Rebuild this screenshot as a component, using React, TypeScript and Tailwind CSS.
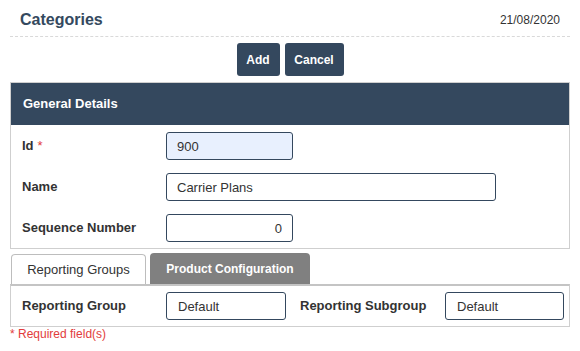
import React from 'react';

const font = { fontFamily: '"Liberation Sans", Arial, sans-serif' };

function Field({ label, required, children }: { label: string; required?: boolean; children: React.ReactNode }) {
  return (
    <div className="flex items-center h-[28px]">
      <div className="w-[144px] shrink-0 text-[13px] font-bold text-[#333]">
        {label}
        {required && <span className="text-[#e23c3c] font-normal ml-[4px]">*</span>}
      </div>
      {children}
    </div>
  );
}

export default function App() {
  return (
    <div className="w-[580px] h-[351px] bg-white px-[10px] text-[#333]" style={font}>
      <div className="flex items-center justify-between h-[37px] pt-[3px] px-[10px] border-b border-dashed border-[#d9d9d9]">
        <h1 className="text-[16px] font-bold text-[#34495e]">Categories</h1>
        <span className="text-[12px] text-[#333]">21/08/2020</span>
      </div>

      <div className="flex justify-center gap-[5px] pt-[6px] pb-[6px]">
        <button className="w-[43px] h-[33px] rounded-[3px] bg-[#34485e] text-white text-[12px] font-bold">Add</button>
        <button className="w-[59px] h-[33px] rounded-[3px] bg-[#34485e] text-white text-[12px] font-bold">Cancel</button>
      </div>

      <div className="border border-[#cfcfcf]">
        <div className="h-[42px] bg-[#34485e] flex items-center px-[12px] text-white text-[13px] font-bold">
          General Details
        </div>
        <div className="flex flex-col gap-[13px] px-[11px] pt-[7px] pb-[6px]">
          <Field label="Id" required>
            <input
              readOnly
              value="900"
              className="w-[127px] h-[28px] rounded-[3px] border border-[#34485e] bg-[#e8f0fe] px-[10px] text-[13px] text-[#333] outline-none"
            />
          </Field>
          <Field label="Name">
            <input
              readOnly
              value="Carrier Plans"
              className="w-[330px] h-[28px] rounded-[3px] border border-[#34485e] bg-white px-[10px] text-[13px] text-[#333] outline-none"
            />
          </Field>
          <Field label="Sequence Number">
            <input
              readOnly
              value="0"
              className="w-[127px] h-[28px] rounded-[3px] border border-[#34485e] bg-white px-[10px] text-right text-[13px] text-[#333] outline-none"
            />
          </Field>
        </div>
      </div>

      <div className="flex items-end gap-[4px] mt-[4px] px-[1px] h-[31px]">
        <div className="w-[135px] h-[30px] rounded-t-[4px] border border-b-0 border-[#bdbdbd] bg-white flex items-center justify-center text-[13px] text-[#333]">
          Reporting Groups
        </div>
        <div className="w-[160px] h-[31px] rounded-t-[4px] bg-[#808080] flex items-center justify-center text-[12px] font-bold text-white">
          Product Configuration
        </div>
      </div>

      <div className="border border-[#cfcfcf] border-t-2 border-t-[#c4c4c4] h-[43px] flex items-center pl-[11px]">
        <div className="w-[144px] shrink-0 text-[13px] font-bold text-[#333]">Reporting Group</div>
        <input
          readOnly
          value="Default"
          className="w-[120px] shrink-0 h-[28px] rounded-[3px] border border-[#34485e] bg-white px-[11px] text-[13px] text-[#333] outline-none"
        />
        <div className="w-[145px] shrink-0 ml-[14px] text-[13px] font-bold text-[#333]">Reporting Subgroup</div>
        <input
          readOnly
          value="Default"
          className="w-[119px] shrink-0 h-[28px] rounded-[3px] border border-[#34485e] bg-white px-[11px] text-[13px] text-[#333] outline-none"
        />
      </div>

      <div className="text-[12px] leading-[14px] text-[#e23c3c]">* Required field(s)</div>
    </div>
  );
}
